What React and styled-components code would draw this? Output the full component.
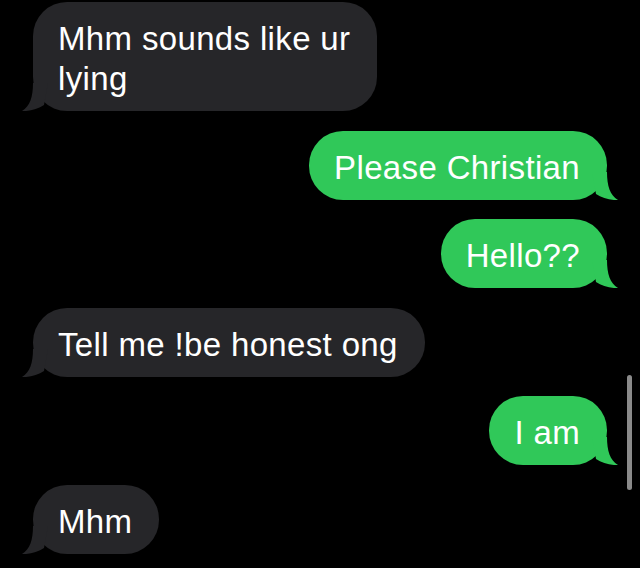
import React from "react";
import styled, { createGlobalStyle } from "styled-components";

const Global = createGlobalStyle`
  html, body { margin: 0; padding: 0; background: #000; }
  body { width: 640px; height: 568px; overflow: hidden; }
`;

const Screen = styled.div`
  position: relative;
  width: 640px;
  height: 568px;
  background: #000;
  overflow: hidden;
  font-family: "Liberation Sans", Arial, sans-serif;
`;

const Thread = styled.div`
  display: flex;
  flex-direction: column;
  gap: 19.5px;
  padding: 2px 33px 0;
`;

const Row = styled.div`
  display: flex;
  justify-content: ${(p) => (p.$out ? "flex-end" : "flex-start")};
`;

const Bubble = styled.div`
  position: relative;
  background: ${(p) => (p.$out ? "#30c859" : "#262629")};
  color: #fff;
  font-size: 33px;
  line-height: 40px;
  padding: 17px 27px 12px 25px;
  border-radius: 34px;
  white-space: pre-line;
  letter-spacing: 0.35px;
`;

const TailSvg = styled.svg`
  position: absolute;
  bottom: 0;
  width: 26px;
  height: 28px;
  ${(p) => (p.$out ? "right: -11px; transform: scaleX(-1);" : "left: -11px;")}
`;

const Scroll = styled.div`
  position: absolute;
  right: 8px;
  top: 375px;
  width: 5px;
  height: 115px;
  border-radius: 3px;
  background: #8a8a8a;
`;

const Tail = ({ out }) => (
  <TailSvg $out={out} viewBox="0 0 26 28">
    <path
      d="M11 0 C11 14 8 23 0 28 C8 28.5 16 26 22 22 L26 0 Z"
      fill={out ? "#30c859" : "#262629"}
    />
  </TailSvg>
);

const messages = [
  { out: false, text: "Mhm sounds like ur\nlying" },
  { out: true, text: "Please Christian" },
  { out: true, text: "Hello??" },
  { out: false, text: "Tell me !be honest ong" },
  { out: true, text: "I am" },
  { out: false, text: "Mhm" },
];

export default function App() {
  return (
    <Screen>
      <Global />
      <Thread>
        {messages.map((m, i) => (
          <Row key={i} $out={m.out}>
            <Bubble $out={m.out}>
              <Tail out={m.out} />
              {m.text}
            </Bubble>
          </Row>
        ))}
      </Thread>
      <Scroll />
    </Screen>
  );
}
